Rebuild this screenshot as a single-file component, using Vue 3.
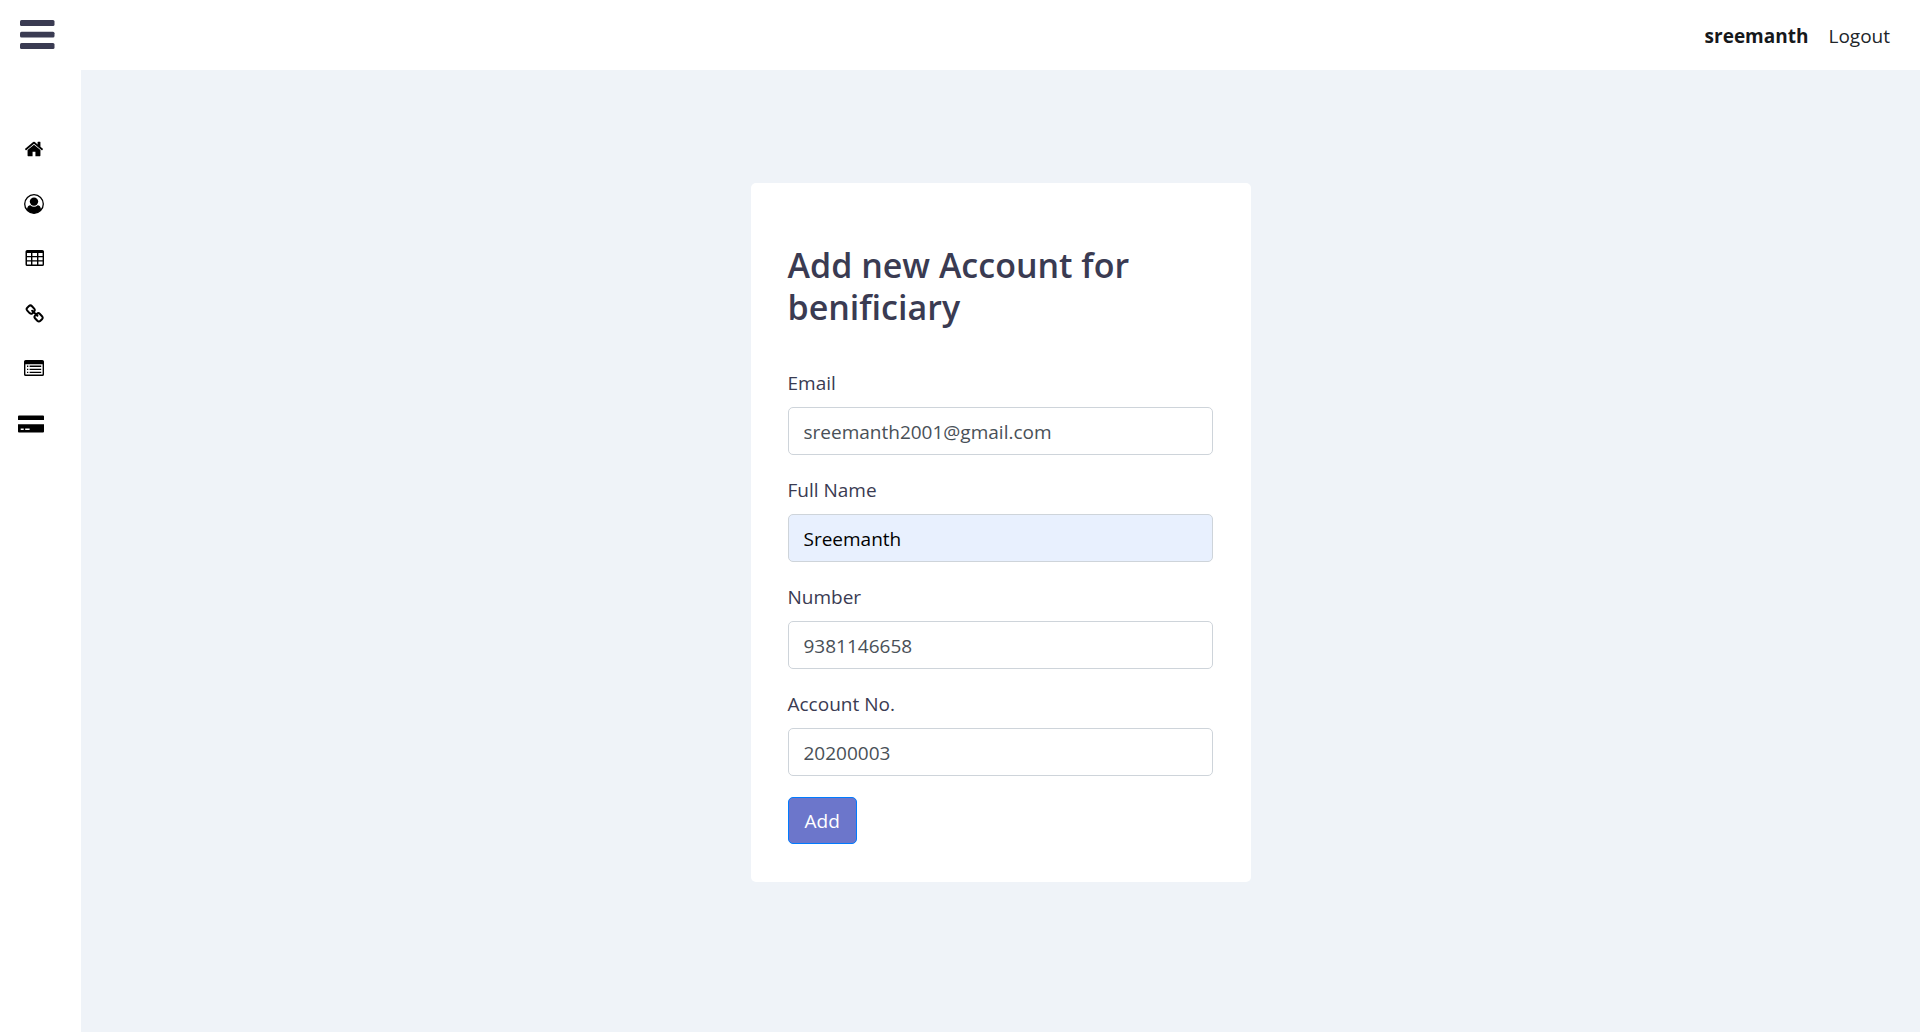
<script setup>
import { reactive } from 'vue'

const fields = reactive([
  { id: 'email', label: 'Email', type: 'email', value: 'sreemanth2001@gmail.com' },
  { id: 'full-name', label: 'Full Name', type: 'text', value: 'Sreemanth', filled: true },
  { id: 'number', label: 'Number', type: 'tel', value: '9381146658' },
  { id: 'account', label: 'Account No.', type: 'text', value: '20200003' }
])
</script>

<template>
  <div class="page">
    <header class="topbar">
      <button class="menu-button" type="button" aria-label="Toggle menu">
        <svg width="35" height="30" viewBox="0 0 35 30" aria-hidden="true">
          <rect width="34.5" height="6" rx="1.5" />
          <rect y="11.800" width="34.5" height="5.600" rx="1.5" />
          <rect y="23" width="34.5" height="6" rx="1.5" />
        </svg>
      </button>
      <nav class="account-nav">
        <a class="user" href="#">sreemanth</a>
        <a href="#">Logout</a>
      </nav>
    </header>

    <div class="body">
      <nav class="sidebar" aria-label="Main">
        <a href="#" aria-label="Home">
          <svg width="20" height="20" viewBox="0 0 1792 1792">
            <path d="M1472 992v480q0 26-19 45t-45 19h-384v-384h-256v384h-384q-26 0-45-19t-19-45v-480q0-1 .5-3t.5-3l575-474 575 474q1 2 1 6zm223-69l-62 74q-8 9-21 11h-3q-13 0-21-7l-692-577-692 577q-12 8-24 7-13-2-21-11l-62-74q-8-10-7-23.500t11-21.500l719-599q32-26 76-26t76 26l244 204v-195q0-14 9-23t23-9h192q14 0 23 9t9 23v408l219 182q10 8 11 21.500t-7 23.500z" />
          </svg>
        </a>
        <a href="#" aria-label="Profile">
          <svg width="20" height="20" viewBox="0 0 20 20">
            <circle cx="10" cy="10" r="9.300" fill="none" stroke="#000" stroke-width="1.300" />
            <circle cx="10" cy="7.600" r="4.200" />
            <path d="M2.900 15.600C3.300 12.800 4.500 11.300 6.400 11.300Q8 12.800 10 12.800T13.600 11.300C15.500 11.300 16.700 12.800 17.100 15.600Q14.500 19.200 10 19.200T2.900 15.600Z" />
          </svg>
        </a>
        <a href="#" aria-label="Accounts">
          <svg width="20" height="20" viewBox="0 0 20 20">
            <path fill-rule="evenodd" d="M3.200 1H18.300Q20 1 20 2.600V15.400Q20 17 18.300 17H3.200Q1.500 17 1.500 15.400V2.600Q1.500 1 3.200 1ZM3 4H7V7H3ZM8.400 4H13V7H8.400ZM14.400 4H18.600V7H14.400ZM3 8.200H7V11.200H3ZM8.400 8.200H13V11.200H8.400ZM14.400 8.200H18.600V11.200H14.400ZM3 12.600H7V15.600H3ZM8.400 12.600H13V15.600H8.400ZM14.400 12.600H18.600V15.600H14.400Z" />
          </svg>
        </a>
        <a href="#" aria-label="Links">
          <svg width="20" height="20" viewBox="0 0 20 20" fill="none" stroke="#000" stroke-width="2" stroke-linecap="round">
            <path d="M9.600 8L10.300 7.200Q11.300 5.800 10.200 4.600L8 2.200Q6.500 .700 5 2.100L3.300 3.700Q1.900 5.100 3.300 6.600L5.600 9.100Q7.100 10.400 8.500 9.200L9.600 8M8.200 6.800L13.400 11.800M12.100 10.700L11 11.600Q9.900 13 11 14.300L13.300 16.800Q14.900 18.200 16.400 16.800L18 15.200Q19.400 13.800 18 12.200L15.700 9.800Q14.400 8.500 13 9.700L12.100 10.700" />
          </svg>
        </a>
        <a href="#" aria-label="Transactions">
          <svg width="20" height="20" viewBox="0 0 20 20">
            <path fill-rule="evenodd" d="M1.700 1H18.300Q20 1 20 2.600V15.400Q20 17 18.300 17H1.700Q0 17 0 15.400V2.600Q0 1 1.700 1ZM1.400 5.200V15Q1.400 15.600 2 15.600H18Q18.600 15.600 18.600 15V5.200Z" />
            <path d="M3 6.600H4.300V7.900H3ZM5.600 6.600H17.200V7.900H5.600ZM3 9.700H4.300V11H3ZM5.600 9.700H17.200V11H5.600ZM3 12.700H4.300V14H3ZM5.600 12.700H17.200V14H5.600Z" />
          </svg>
        </a>
        <a href="#" aria-label="Cards">
          <svg width="26" height="18" viewBox="0 0 26 18">
            <path fill-rule="evenodd" d="M1 .5H25Q26 .5 26 1.500V5H0V1.500Q0 .5 1 .5ZM0 9.200H26V16.500Q26 17.500 25 17.500H1Q0 17.500 0 16.500ZM2.700 13.500V15H5.700V13.500ZM7.200 13.500V15H11.600V13.500Z" />
          </svg>
        </a>
      </nav>

      <main class="content">
        <form class="card" @submit.prevent>
          <h3>Add new Account for benificiary</h3>
          <div v-for="field in fields" :key="field.id" class="field">
            <label :for="field.id">{{ field.label }}</label>
            <input
              :id="field.id"
              v-model="field.value"
              :type="field.type"
              :class="{ filled: field.filled }"
            />
          </div>
          <button class="submit" type="submit">Add</button>
        </form>
      </main>
    </div>
  </div>
</template>

<style>
body {
  margin: 0;
}
</style>

<style scoped>
.page {
  display: flex;
  flex-direction: column;
  min-height: 100vh;
  background: #fff;
  color: #212529;
  font-family: "Segoe UI", "Open Sans", "Noto Sans", sans-serif;
  font-size: 19px;
  line-height: 30px;
}

.page *,
.page {
  box-sizing: border-box;
}

.topbar {
  display: flex;
  align-items: center;
  justify-content: space-between;
  height: 70px;
  padding: 0 30px 0 20px;
}

.menu-button {
  display: flex;
  padding: 0;
  border: 0;
  background: none;
  fill: #3a3b52;
}

.account-nav {
  display: flex;
  gap: 20px;
  padding-top: 2px;
}

.account-nav a {
  color: #212529;
  text-decoration: none;
}

.account-nav .user {
  color: #16181b;
  font-weight: 700;
}

.body {
  display: flex;
  flex: 1;
}

.sidebar {
  display: flex;
  flex: none;
  flex-direction: column;
  width: 81px;
  padding: 51px 37px 0 0;
}

.sidebar a {
  display: flex;
  align-items: center;
  justify-content: flex-end;
  height: 55px;
}

.content {
  flex: 1;
  padding: 113px 20px 40px;
  background: #eff3f8;
}

.card {
  width: 100%;
  max-width: 500px;
  margin: 0 auto;
  padding: 61px 38px 38px 37px;
  border-radius: 5px;
  background: #fff;
  color: #3a3b52;
}

h3 {
  margin: 0 0 40px;
  font-size: 34px;
  font-weight: 600;
  line-height: 42px;
}

.field {
  display: flex;
  flex-direction: column;
  gap: 9px;
}

.field + .field {
  margin-top: 20px;
}

input {
  width: 100%;
  height: 48px;
  padding: 2px 15px 0;
  border: 1px solid #ced4da;
  border-radius: 5px;
  background: #fff;
  color: #495057;
  font: inherit;
}

input.filled {
  background: #e8f0fe;
  color: #000;
}

.submit {
  height: 47px;
  margin-top: 21px;
  padding: 0 16px;
  border: 1px solid #007bff;
  border-radius: 5px;
  background: #6c76cb;
  color: #fff;
  font: inherit;
}
</style>
